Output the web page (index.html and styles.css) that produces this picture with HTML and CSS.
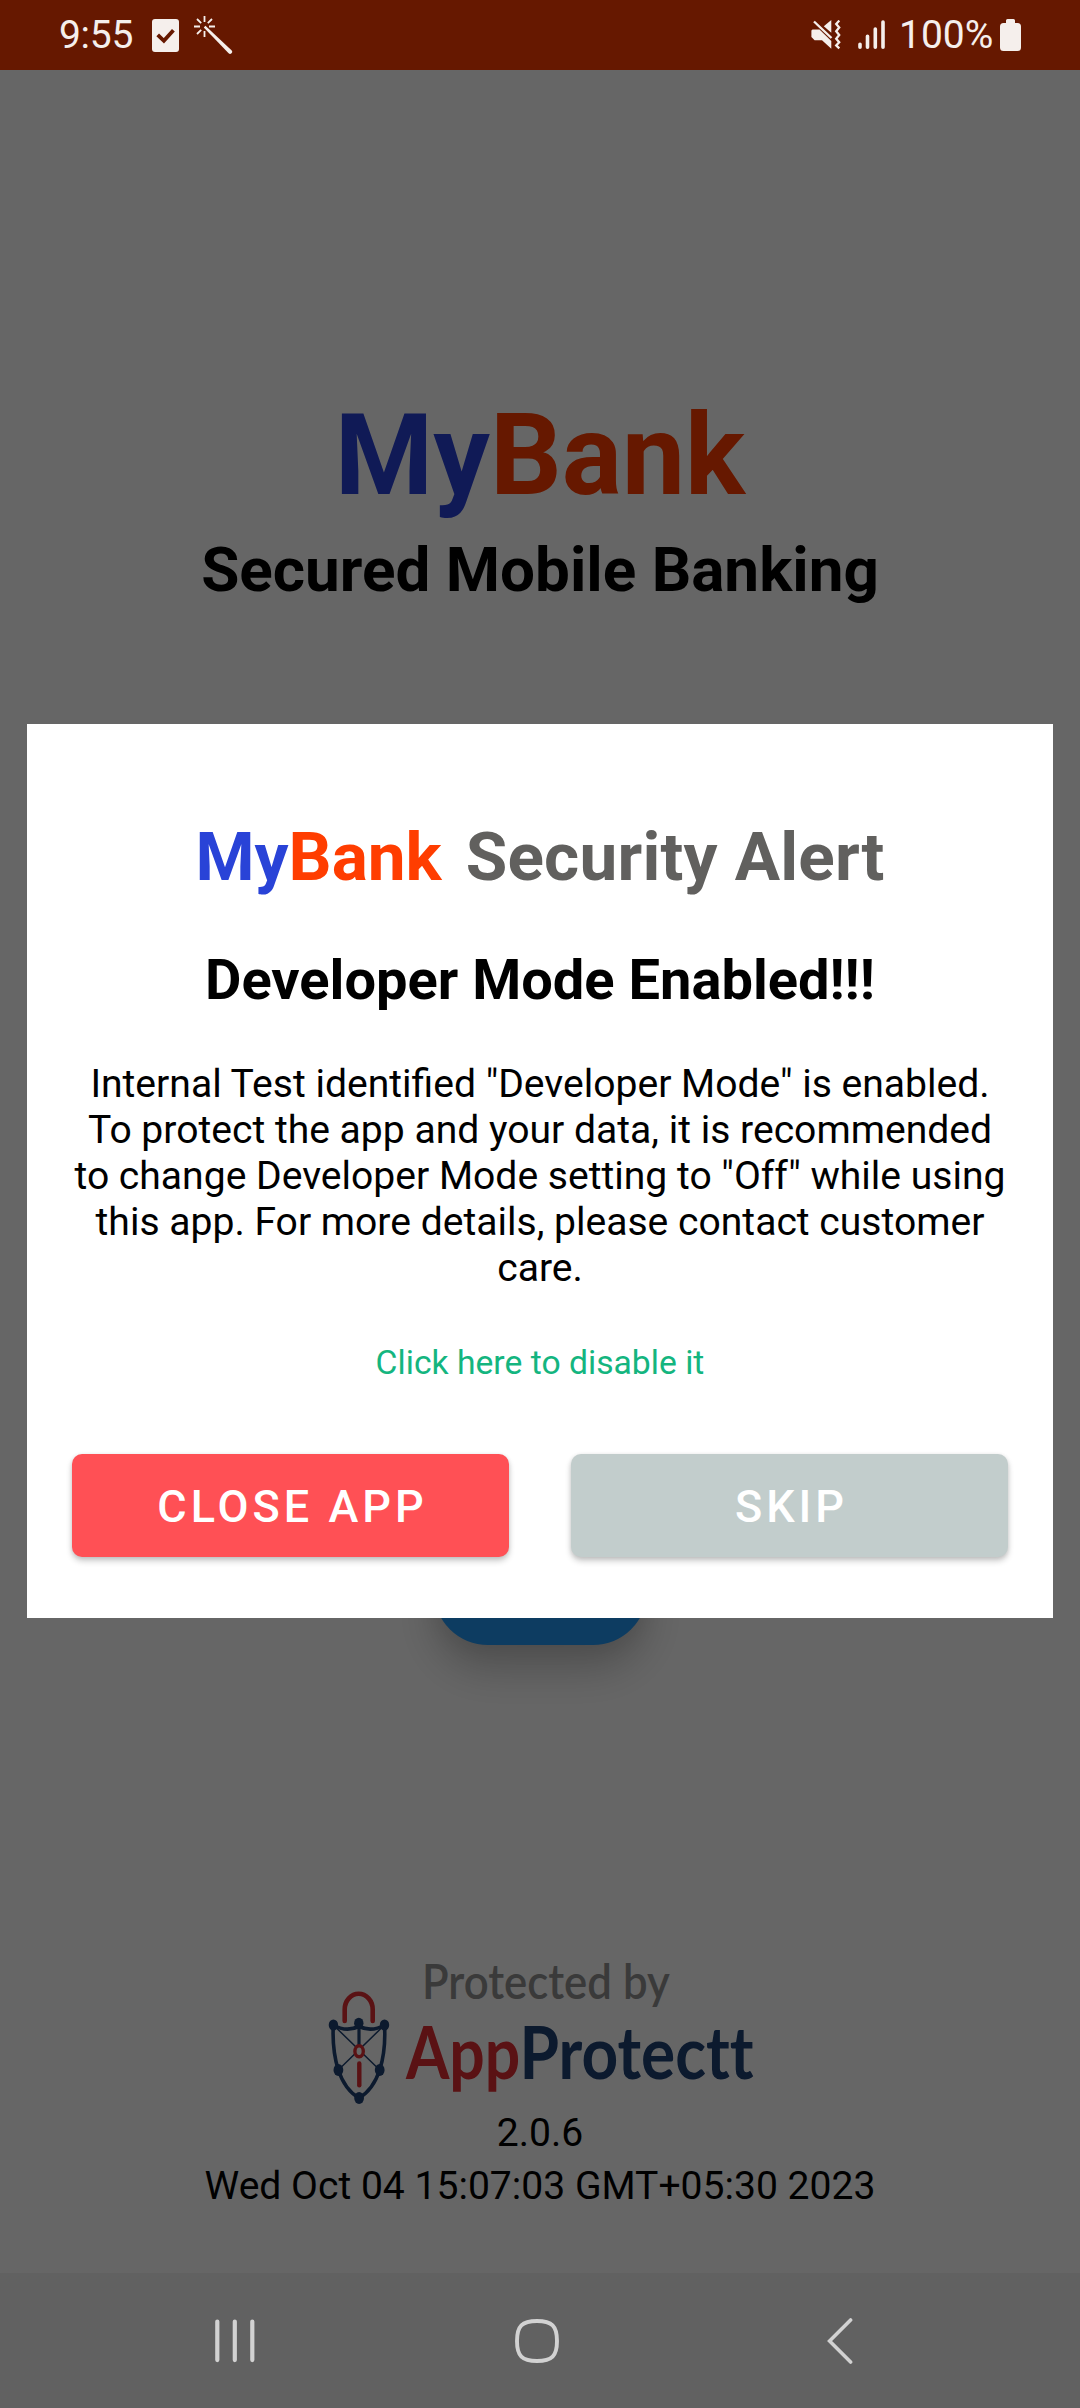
FILE: index.html
```html
<!DOCTYPE html>
<html lang="en">
<head>
<meta charset="utf-8">
<title>MyBank Security Alert</title>
<link rel="stylesheet" href="styles.css">
</head>
<body>
<div class="phone">
  <header class="status-bar">
    <div class="status-left">
      <span class="clock">9:55</span>
      <svg class="icon-check" width="27" height="33" viewBox="0 0 27 33">
        <rect width="27" height="33" rx="3" fill="#f5efec"/>
        <path d="M5.7 15.8l6.2 6 9.5-10.6" fill="none" stroke="#661800" stroke-width="3.8"/>
      </svg>
      <svg class="icon-wand" width="39" height="38" viewBox="0 0 39 38" fill="none" stroke="#f5efec" stroke-linecap="butt">
        <path d="M10.5 0v6M10.5 15v6M0 10.5h6M15 10.5h6M3 3l4.2 4.2M13.8 7.2L18 3M3 18l4.2-4.2M13.8 13.8L18 18" stroke-width="1.8"/>
        <path d="M9.8 11.4L34.6 37.2a2 2 0 0 0 2.9-2.9L11.4 9.8z" fill="#f5efec" stroke="none"/>
      </svg>
    </div>
    <div class="status-right">
      <svg class="icon-mute" width="30" height="30" viewBox="0 0 30 30">
        <path d="M1.5 9.4h7L20.3 21v7.8L11 20.3H3.6L.4 17v-6.5zM20.3 0v12.8L12.8 6.3z" fill="#f5efec"/>
        <path d="M3 1.5L20.5 18" stroke="#f5efec" stroke-width="2.4"/>
        <path d="M28.3.6L25.200 4l3 3.500-3 3.700 3 3.800-3 3.700 3 3.500-3 3.200 3.100 3" fill="none" stroke="#f5efec" stroke-width="2.3"/>
      </svg>
      <svg class="icon-signal" width="28" height="30" viewBox="0 0 28 30" stroke="#f5efec" stroke-width="3.6" stroke-linecap="round">
        <path d="M2 24.300v3M9.500 16.300v11M17.300 9v18.300M25 2v25.300"/>
      </svg>
      <span class="battery-text">100%</span>
      <svg class="icon-battery" width="21" height="32" viewBox="0 0 21 32" fill="#f5efec">
        <path d="M7.500 0h6q1.500 0 1.500 1.500V4h2.500Q21 4 21 7.500v21Q21 32 17.500 32h-14Q0 32 0 28.500v-21Q0 4 3.500 4H6V1.500Q6 0 7.500 0z"/>
      </svg>
    </div>
  </header>

  <main class="screen">
    <h1 class="brand"><span class="my">My</span><span class="bank">Bank</span></h1>
    <p class="tagline">Secured Mobile Banking</p>
    <div class="login-button"></div>
    <footer class="about">
      <svg class="protect-logo" width="430" height="160" viewBox="325 1950 430 160">
        <text class="logo-by" transform="translate(422 1999) scale(.9 1)">Protected by</text>
        <text class="logo-app" transform="translate(406 2079) scale(.868 1)">App</text>
        <text class="logo-protectt" transform="translate(519.500 2079) scale(.888 1)">Protectt</text>
        <g fill="none" stroke="#1e4173">
          <path d="M333.300 2025Q346 2032.500 359 2026.500Q372 2032.500 384.500 2025Q386 2050 379.700 2070Q373 2090 359 2098Q345 2090 338.300 2070Q332 2050 333.300 2025z" stroke-width="3.6"/>
          <path d="M359 2023v24" stroke-width="3.2"/>
          <path d="M333.300 2025L379.700 2070M384.500 2025L338.300 2070" stroke-width="1.5"/>
        </g>
        <g fill="#1e4173">
          <ellipse cx="333.400" cy="2025" rx="4.700" ry="5.600"/>
          <ellipse cx="358.800" cy="2023.300" rx="4.700" ry="5.600"/>
          <ellipse cx="384.500" cy="2025" rx="4.700" ry="5.600"/>
          <ellipse cx="338.400" cy="2070" rx="4.900" ry="5.900"/>
          <ellipse cx="379.700" cy="2070" rx="4.900" ry="5.900"/>
          <ellipse cx="359.100" cy="2098" rx="4.900" ry="5.900"/>
        </g>
        <path d="M344.700 2021V2009.500A14 15.700 0 0 1 372.700 2009.500V2021" fill="none" stroke="#e12d32" stroke-width="4.6" stroke-linecap="round"/>
        <ellipse cx="359.100" cy="2051.300" rx="4.200" ry="5.500" fill="#fff" stroke="#e12d32" stroke-width="3.4"/>
        <path d="M359.300 2063.500v21.700" stroke="#e12d32" stroke-width="4.4" stroke-linecap="round"/>
      </svg>
      <p class="version">2.0.6</p>
      <p class="build-date">Wed Oct 04 15:07:03 GMT+05:30 2023</p>
    </footer>

    <div class="scrim">
      <section class="dialog" role="alertdialog">
        <h2 class="dialog-title"><span class="dialog-brand"><span class="my">My</span><span class="bank">Bank</span></span><span class="dialog-alert">Security Alert</span></h2>
        <h3 class="dialog-heading">Developer Mode Enabled!!!</h3>
        <p class="dialog-body">Internal Test identified "Developer Mode" is enabled. To protect the app and your data, it is recommended to change Developer Mode setting to "Off" while using this app. For more details, please contact customer care.</p>
        <a class="dialog-link">Click here to disable it</a>
        <div class="dialog-actions">
          <button class="action close">CLOSE APP</button>
          <button class="action skip">SKIP</button>
        </div>
      </section>
    </div>
  </main>

  <nav class="nav-bar">
    <svg width="40" height="44" viewBox="0 0 40 44" stroke="#d2d2d2" stroke-width="4.2" stroke-linecap="round">
      <path d="M2.300 2.500v38.600M19.800 2.500v38.600M37.300 2.500v38.600"/>
    </svg>
    <svg class="nav-home" width="44" height="44" viewBox="0 0 44 44" fill="none" stroke="#d2d2d2" stroke-width="3.9">
      <path d="M22 2C37 2 42 7 42 22S37 42 22 42 2 37 2 22 7 2 22 2z"/>
    </svg>
    <svg width="26" height="46" viewBox="0 0 26 46" fill="none" stroke="#d2d2d2" stroke-width="3.6" stroke-linecap="round">
      <path d="M23.600 2L2.600 23l21 21"/>
    </svg>
  </nav>
</div>
</body>
</html>
```
FILE: styles.css
```css
* {
  box-sizing: border-box;
}

body,
h1,
h2,
h3,
p {
  margin: 0;
}

body {
  font-family: Roboto, "Liberation Sans", sans-serif;
  color: #000;
}

svg {
  display: block;
}

.phone {
  display: flex;
  flex-direction: column;
  width: 1080px;
  height: 2408px;
  overflow: hidden;
}

/* Status bar */
.status-bar {
  display: flex;
  justify-content: space-between;
  height: 70px;
  padding: 0 59px;
  background: #661800;
  color: #f5efec;
  font-size: 39px;
  line-height: 46px;
}

.status-left,
.status-right {
  display: flex;
  align-items: flex-start;
}

.clock,
.battery-text {
  margin-top: 12px;
}

.clock {
  width: 93px;
  letter-spacing: -0.3px;
}

.icon-check {
  margin: 19px 15px 0 0;
}

.icon-wand {
  margin-top: 16px;
}

.icon-mute {
  margin: 20px 17px 0 0;
}

.icon-signal {
  margin: 20px 13px 0 0;
}

.battery-text {
  width: 101px;
}

.icon-battery {
  margin-top: 19px;
}

/* App screen behind the dialog */
.screen {
  position: relative;
  display: flex;
  flex-direction: column;
  align-items: center;
  height: 2203px;
  padding-top: 320px;
  background: #fff;
}

.my {
  color: #2943d7;
}

.bank {
  color: #ff3d00;
}

.brand {
  font-size: 112.5px;
  line-height: 132px;
}

.tagline {
  margin-top: 12px;
  font-size: 62px;
  font-weight: 700;
  line-height: 72px;
}

.login-button {
  width: 213px;
  height: 108px;
  margin: 931px 0 0 1px;
  border-radius: 54px;
  background: #2196f3;
  box-shadow: 0 24px 40px rgba(0, 0, 0, 0.22), 0 0 24px rgba(0, 0, 0, 0.08);
}

.about {
  display: flex;
  flex-direction: column;
  align-items: center;
  margin-top: 305px;
  font-size: 39.1px;
  line-height: 46px;
}

.build-date {
  margin-top: 7px;
}

.logo-by {
  font: 600 48.6px Lato, sans-serif;
  fill: #919191;
}

.logo-app,
.logo-protectt {
  font: 700 72px Lato, sans-serif;
  font-variant-ligatures: none;
}

.logo-app {
  fill: #e12d32;
}

.logo-protectt {
  fill: #1e4173;
}

/* Alert dialog */
.scrim {
  position: absolute;
  inset: 0;
  display: flex;
  flex-direction: column;
  align-items: center;
  justify-content: center;
  padding-bottom: 1px;
  background: rgba(0, 0, 0, 0.6);
}

.dialog {
  display: flex;
  flex-direction: column;
  align-items: center;
  width: 1026px;
  height: 894px;
  padding: 93px 45px 61px;
  background: #fff;
}

.dialog-title {
  display: flex;
  gap: 24px;
  font-size: 67.5px;
  line-height: 79px;
}

.dialog-alert {
  color: #61605e;
  letter-spacing: 0.2px;
}

.dialog-heading {
  margin-top: 51px;
  font-size: 56px;
  line-height: 66px;
}

.dialog-body {
  margin: 48px 0 0;
  font-size: 39.1px;
  line-height: 46px;
  text-align: center;
}

.dialog-link {
  margin-top: 52px;
  color: #14b57f;
  font-size: 33.7px;
  line-height: 40px;
}

.dialog-actions {
  display: flex;
  gap: 62px;
  align-self: stretch;
  margin-top: 71px;
}

.action {
  flex: 1;
  height: 103px;
  padding: 2px 0 0 4px;
  border: 0;
  border-radius: 10px;
  color: #fff;
  font: 500 45px/53px Roboto, sans-serif;
  letter-spacing: 4px;
  box-shadow: 0 4px 6px rgba(0, 0, 0, 0.2), 0 1px 4px rgba(0, 0, 0, 0.1);
}

.close {
  background: #ff5055;
}

.skip {
  background: #c2cdcc;
}

/* System navigation */
.nav-bar {
  display: flex;
  justify-content: space-between;
  align-items: center;
  height: 135px;
  padding: 0 227px 0 215px;
  background: #616161;
}

.nav-home {
  margin-right: 8px;
}
```
